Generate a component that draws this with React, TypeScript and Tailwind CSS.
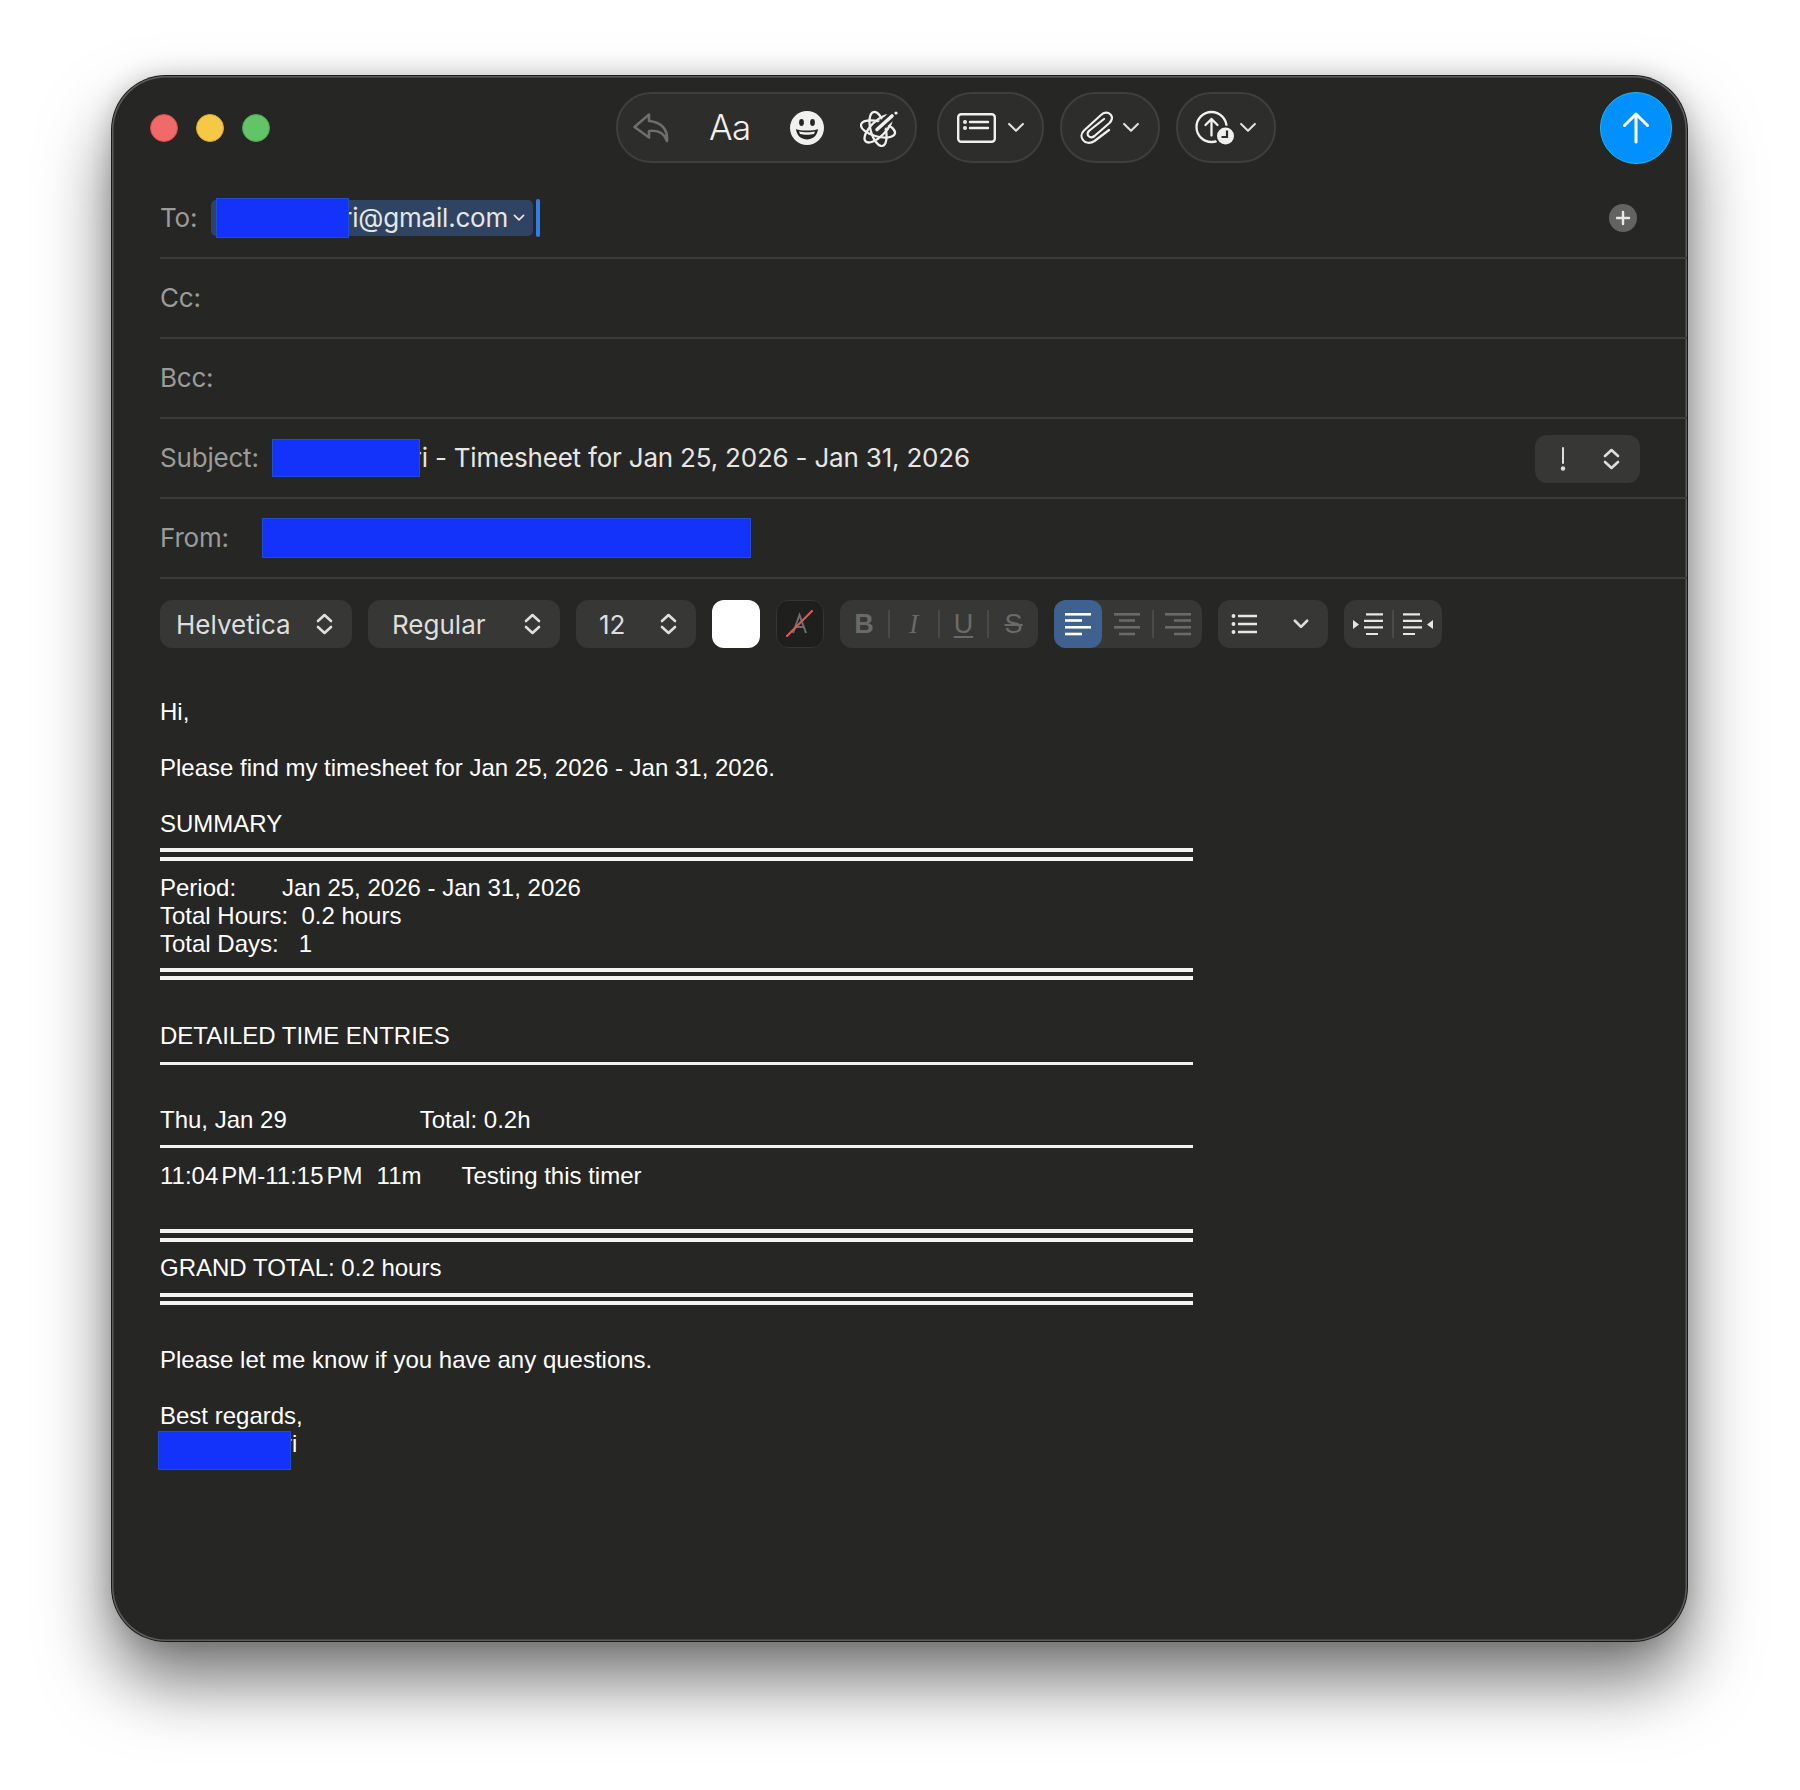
import React from 'react';

const Redact = ({ className }: { className: string }) => (
  <div className={`relative z-10 shrink-0 bg-[#1433fa] border-[1.5px] border-[#1f4fd0] ${className}`} />
);

const UpDown = ({ className = '' }: { className?: string }) => (
  <svg className={className} width="17" height="22" viewBox="0 0 17 22" fill="none" stroke="#dededc" strokeWidth="2.6" strokeLinecap="round" strokeLinejoin="round">
    <path d="M2 8 L8.5 2 L15 8" />
    <path d="M2 14 L8.5 20 L15 14" />
  </svg>
);

const Chevron = ({ className = '', w = 18, color = '#dededc', sw = 2.2 }: { className?: string; w?: number; color?: string; sw?: number }) => (
  <svg className={className} width={w} height={w * 0.6} viewBox="0 0 18 11" fill="none" stroke={color} strokeWidth={sw} strokeLinecap="round" strokeLinejoin="round">
    <path d="M2 2 L9 9 L16 2" />
  </svg>
);

const Lines = ({ align, color, sw = 2.6 }: { align: 'left' | 'center' | 'right'; color: string; sw?: number }) => {
  const short = align === 'left' ? 'M0 7.5H17' : align === 'center' ? 'M5 7.5H21' : 'M9 7.5H26';
  const short2 = align === 'left' ? 'M0 21H17' : align === 'center' ? 'M5 21H21' : 'M9 21H26';
  return (
    <svg width="26" height="23" viewBox="0 0 26 23" fill="none" stroke={color} strokeWidth={sw}>
      <path d="M0 1.3H26" />
      <path d={short} />
      <path d="M0 14.3H26" />
      <path d={short2} />
    </svg>
  );
};

const Divider = () => <div className="w-[2px] h-[28px] bg-[#4a4a49]" />;

const Rule = () => <div className="h-[3px] bg-[#f2f2f2] w-[1033px]" />;
const DoubleRule = () => <div className="h-[12.5px] border-y-[4px] border-[#f4f4f4] w-[1033px]" />;

const Row = ({ children }: { children: React.ReactNode }) => (
  <div className="h-[80px] ml-[48px] pb-[1px] flex items-center border-b-2 border-[#3c3c3b] text-[26px] tracking-[-0.2px]">{children}</div>
);

const Label = ({ children, className = '' }: { children: React.ReactNode; className?: string }) => (
  <span className={`text-[#9b9b99] ${className}`}>{children}</span>
);

const Select = ({ label, width, textClass }: { label: string; width: string; textClass: string }) => (
  <div className={`h-[48px] rounded-[12px] bg-[#373736] flex items-center ${width}`}>
    <span className={`text-[#dededc] text-[26px] ${textClass}`}>{label}</span>
    <UpDown className="ml-auto mr-[19px]" />
  </div>
);

export default function App() {
  return (
    <div className="w-[1800px] h-[1790px] bg-white pt-[76px] pl-[112px] overflow-hidden font-['Inter',sans-serif]">
      <div className="w-[1575px] h-[1565px] rounded-[54px] bg-[#262625] shadow-[0_0_0_1px_#1a1a1a,inset_0_0_0_1.5px_#5c5c5a,0_0_24px_rgba(0,0,0,0.18),0_40px_70px_rgba(0,0,0,0.55)]">
        {/* title bar */}
        <div className="h-[103px] flex items-start pt-[16px]">
          <div className="flex gap-[18px] ml-[38px] mt-[22px]">
            <div className="w-[28px] h-[28px] rounded-full bg-[#f16a6a] border border-[#d84a48]" />
            <div className="w-[28px] h-[28px] rounded-full bg-[#f5c945] border border-[#dba92e]" />
            <div className="w-[28px] h-[28px] rounded-full bg-[#62c466] border border-[#4aa94f]" />
          </div>

          <div className="ml-[346px] w-[301px] h-[71px] rounded-[35px] bg-[#2d2d2b] border-2 border-[#3f3f3d] flex items-center pl-[15px]">
            <svg width="36" height="30" viewBox="0 0 36 30" fill="none" stroke="#6e6e6c" strokeWidth="2.6" strokeLinejoin="round" strokeLinecap="round">
              <path d="M16 1.5 L1.5 14 L16 24.5 L16 18 C24 17 31 19 34 28 C35 16 28 9 16 8 Z" />
            </svg>
            <span className="ml-[40px] w-[41px] text-[35px] leading-none text-[#f0f0ee] font-light tracking-[-0.6px]">Aa</span>
            <svg className="ml-[40px]" width="34" height="34" viewBox="0 0 34 34">
              <circle cx="17" cy="17" r="17" fill="#f0f0ee" />
              <ellipse cx="11.5" cy="11.5" rx="2.4" ry="3.4" fill="#262625" />
              <ellipse cx="22.5" cy="11.5" rx="2.4" ry="3.4" fill="#262625" />
              <path d="M6 18 C10 20 24 20 28 18 C27.5 25 22 28.5 17 28.5 C12 28.5 6.5 25 6 18 Z" fill="#262625" />
              <path d="M9 20.5 C13 21.5 21 21.5 25 20.5 L24 23 C20 24 14 24 10 23 Z" fill="#f0f0ee" />
            </svg>
            <svg className="ml-[36px]" width="39" height="38" viewBox="0 0 39 38" fill="none" stroke="#f0f0ee" strokeWidth="2.3" strokeLinecap="round">
              <ellipse cx="18" cy="20" rx="7.5" ry="17.5" transform="rotate(-15 18 20)" />
              <ellipse cx="18" cy="20" rx="7.5" ry="17.5" transform="rotate(45 18 20)" />
              <ellipse cx="18" cy="20" rx="7.5" ry="17.5" transform="rotate(105 18 20)" />
              <path d="M17 20.5 L33 6" stroke="#2d2d2b" strokeWidth="9" />
              <path d="M17 20.5 L32 7" strokeWidth="3.6" />
              <circle cx="36" cy="4" r="1.6" fill="#f0f0ee" stroke="none" />
            </svg>
          </div>

          <div className="ml-[20px] w-[107px] h-[71px] rounded-[35px] bg-[#2d2d2b] border-2 border-[#3f3f3d] flex items-center pl-[18px]">
            <svg width="39" height="30" viewBox="0 0 39 30" fill="none" stroke="#f0f0ee" strokeWidth="2.4" strokeLinecap="round">
              <rect x="1.2" y="1.2" width="36.6" height="27.6" rx="3" />
              <circle cx="8" cy="9" r="0.8" fill="#f0f0ee" />
              <circle cx="8" cy="15" r="0.8" fill="#f0f0ee" />
              <path d="M13 9H31" />
              <path d="M13 15H31" />
            </svg>
            <Chevron className="ml-[11px]" />
          </div>

          <div className="ml-[16px] w-[100px] h-[71px] rounded-[35px] bg-[#2d2d2b] border-2 border-[#3f3f3d] flex items-center pl-[18px]">
            <svg width="33" height="35" viewBox="0 0 33 35" fill="none" stroke="#f0f0ee" strokeWidth="2.2" strokeLinecap="round" strokeLinejoin="round">
              <path d="M29 20 L14.5 31 C10 34 5 33 3 30 C0.5 27 1.5 23 4 20.5 L21 5 C24 2 28 2 30.5 4.5 C33 7 32 10.5 29.5 13 L14.5 26 C12.5 27.5 10 27.5 8.5 26 C7 24.5 7.5 22 9.5 20.5 L24 9" />
            </svg>
            <Chevron className="ml-[9px]" />
          </div>

          <div className="ml-[16px] w-[100px] h-[71px] rounded-[35px] bg-[#2d2d2b] border-2 border-[#3f3f3d] flex items-center pl-[17px]">
            <svg width="40" height="35" viewBox="0 0 40 35" fill="none" stroke="#f0f0ee" strokeWidth="2.3" strokeLinecap="round" strokeLinejoin="round">
              <circle cx="16.5" cy="17" r="15" />
              <path d="M16.5 25.5 V9 M10.5 15 L16.5 9 L22.5 15" />
              <circle cx="30.5" cy="26" r="9.5" fill="#f0f0ee" stroke="#2d2d2b" strokeWidth="2" />
              <path d="M32 20.5 V27 H26.5" stroke="#2d2d2b" strokeWidth="2.2" strokeLinecap="butt" strokeLinejoin="miter" fill="none" />
            </svg>
            <Chevron className="ml-[4px]" />
          </div>

          <div className="ml-auto mr-[15px] w-[72px] h-[72px] rounded-full bg-[#0091ff] border border-[#14c0f5] flex items-center justify-center">
            <svg width="26" height="32" viewBox="0 0 26 32" fill="none" stroke="#ffffff" strokeWidth="3" strokeLinecap="round" strokeLinejoin="round">
              <path d="M13 30 V2 M1.5 13.5 L13 2 L24.5 13.5" />
            </svg>
          </div>
        </div>

        {/* address fields */}
        <Row>
          <Label>To:</Label>
          <div className="ml-[14px] h-[36px] w-[322px] rounded-[5px] bg-[#2f4463] flex items-center pl-[5px] text-[#e6e6e4]">
            <Redact className="w-[133px] h-[40px]" />
            <span className="-ml-[7px]">ri@gmail.com</span>
            <Chevron className="ml-[5px]" w={12} color="#e6e6e4" sw={2.6} />
          </div>
          <div className="ml-[3px] w-[4px] h-[38px] rounded-[2px] bg-[#2f7fe8]" />
          <div className="ml-auto mr-[50px] w-[28px] h-[28px] rounded-full bg-[#636362] flex items-center justify-center">
            <svg width="16" height="16" viewBox="0 0 16 16" stroke="#e8e8e6" strokeWidth="2.4" strokeLinecap="round">
              <path d="M8 2 V14 M2 8 H14" />
            </svg>
          </div>
        </Row>
        <Row>
          <Label>Cc:</Label>
        </Row>
        <Row>
          <Label>Bcc:</Label>
        </Row>
        <Row>
          <Label>Subject:</Label>
          <Redact className="ml-[13px] w-[148px] h-[38px]" />
          <span className="-ml-[8px] text-[#e6e6e4]">ri - Timesheet for Jan 25, 2026 - Jan 31, 2026</span>
          <div className="ml-auto mr-[47px] mt-[2px] w-[105px] h-[48px] rounded-[12px] bg-[#373736] flex items-center">
            <svg className="ml-[25px]" width="6" height="24" viewBox="0 0 6 24" fill="#dededc">
              <rect x="2" y="0" width="2" height="17" rx="1" />
              <circle cx="3" cy="21.5" r="2.2" />
            </svg>
            <UpDown className="ml-[37px]" />
          </div>
        </Row>
        <Row>
          <Label>From:</Label>
          <Redact className="ml-[33px] w-[489px] h-[40px]" />
        </Row>

        {/* format bar */}
        <div className="ml-[48px] mt-[21px] flex gap-[16px] items-center">
          <Select label="Helvetica" width="w-[192px]" textClass="ml-[16px]" />
          <Select label="Regular" width="w-[192px]" textClass="ml-[24px]" />
          <Select label="12" width="w-[120px]" textClass="ml-[23px]" />
          <div className="w-[48px] h-[48px] rounded-[12px] bg-white" />
          <div className="w-[48px] h-[48px] rounded-[12px] bg-[#1f1f1e] border border-[#353534] flex items-center justify-center">
            <svg width="32" height="30" viewBox="0 0 32 30" fill="none">
              <path d="M9 24 L15.5 6 L22 24 M11 18 H20" stroke="#6e6e6c" strokeWidth="2" />
              <path d="M3 27 L28 2" stroke="#e25550" strokeWidth="2.2" strokeLinecap="round" />
            </svg>
          </div>

          <div className="w-[198px] h-[48px] rounded-[12px] bg-[#373736] flex items-center text-[#6a6a68]">
            <span className="w-[48px] text-center text-[27px] font-bold font-['Liberation_Sans',sans-serif]">B</span>
            <Divider />
            <span className="w-[48px] text-center text-[27px] italic font-['Liberation_Serif',serif]">I</span>
            <Divider />
            <span className="w-[48px] text-center text-[27px] underline underline-offset-[3px] font-['Liberation_Sans',sans-serif]">U</span>
            <Divider />
            <span className="w-[49px] text-center text-[27px] line-through font-['Liberation_Sans',sans-serif]">S</span>
          </div>

          <div className="w-[148px] h-[48px] rounded-[12px] bg-[#373736] flex items-center">
            <div className="w-[48px] h-[48px] rounded-[12px] bg-[#3f6190] flex items-center justify-center">
              <Lines align="left" color="#ffffff" />
            </div>
            <div className="w-[50px] flex justify-center">
              <Lines align="center" color="#6a6a68" />
            </div>
            <Divider />
            <div className="w-[48px] flex justify-center">
              <Lines align="right" color="#6a6a68" />
            </div>
          </div>

          <div className="w-[110px] h-[48px] rounded-[12px] bg-[#373736] flex items-center pl-[13px]">
            <svg width="27" height="22" viewBox="0 0 27 22" fill="none" stroke="#e6e6e4" strokeWidth="2.4">
              <circle cx="2.5" cy="3" r="1.2" fill="#e6e6e4" strokeWidth="1.5" />
              <circle cx="2.5" cy="11" r="1.2" fill="#e6e6e4" strokeWidth="1.5" />
              <circle cx="2.5" cy="19" r="1.2" fill="#e6e6e4" strokeWidth="1.5" />
              <path d="M7 3H26 M7 11H26 M7 19H26" />
            </svg>
            <Chevron className="ml-[35px]" w={16} sw={3} />
          </div>

          <div className="w-[98px] h-[48px] rounded-[12px] bg-[#373736] flex items-center pl-[9px]">
            <svg width="30" height="23" viewBox="0 0 30 23" fill="none" stroke="#e6e6e4" strokeWidth="2.2">
              <path d="M0 7 L6 11.5 L0 16 Z" fill="#e6e6e4" stroke="none" />
              <path d="M13 1.3H30 M11 7.8H30 M11 14.3H30 M13 21H25" />
            </svg>
            <div className="ml-[9px]">
              <Divider />
            </div>
            <svg className="ml-[9px]" width="30" height="23" viewBox="0 0 30 23" fill="none" stroke="#e6e6e4" strokeWidth="2.2">
              <path d="M30 7 L24 11.5 L30 16 Z" fill="#e6e6e4" stroke="none" />
              <path d="M0 1.3H17 M0 7.8H19 M0 14.3H19 M0 21H12" />
            </svg>
          </div>
        </div>

        {/* message body */}
        <div className="ml-[48px] mt-[50px] text-[24px] leading-[28px] text-white font-['Liberation_Sans',sans-serif] whitespace-pre">
          <p>Hi,</p>
          <p className="mt-[28px]">Please find my timesheet for Jan 25, 2026 - Jan 31, 2026.</p>
          <p className="mt-[28px]">SUMMARY</p>
          <div className="mt-[10px]">
            <DoubleRule />
          </div>
          <div className="mt-[13px]">
            <p>Period:<span className="ml-[46px]">Jan 25, 2026 - Jan 31, 2026</span></p>
            <p>Total Hours:  0.2 hours</p>
            <p>Total Days:   1</p>
          </div>
          <div className="mt-[10px]">
            <DoubleRule />
          </div>
          <p className="mt-[42px]">DETAILED TIME ENTRIES</p>
          <div className="mt-[12px]">
            <Rule />
          </div>
          <p className="mt-[41px]">Thu, Jan 29<span className="ml-[133px]">Total: 0.2h</span></p>
          <div className="mt-[11px]">
            <Rule />
          </div>
          <p className="mt-[14px]">
            11:04<span className="ml-[3px]">PM</span>-11:15<span className="ml-[3px]">PM</span>
            <span className="ml-[14px]">11m</span>
            <span className="ml-[40px]">Testing this timer</span>
          </p>
          <div className="mt-[39px]">
            <DoubleRule />
          </div>
          <p className="mt-[12px]">GRAND TOTAL: 0.2 hours</p>
          <div className="mt-[11px]">
            <DoubleRule />
          </div>
          <p className="mt-[41px]">Please let me know if you have any questions.</p>
          <p className="mt-[28px]">Best regards,</p>
          <div className="flex items-start h-[28px] -ml-[2px]">
            <Redact className="mt-[1px] w-[133px] h-[39px]" />
            <span className="-ml-[7px]">ri</span>
          </div>
        </div>
      </div>
    </div>
  );
}
